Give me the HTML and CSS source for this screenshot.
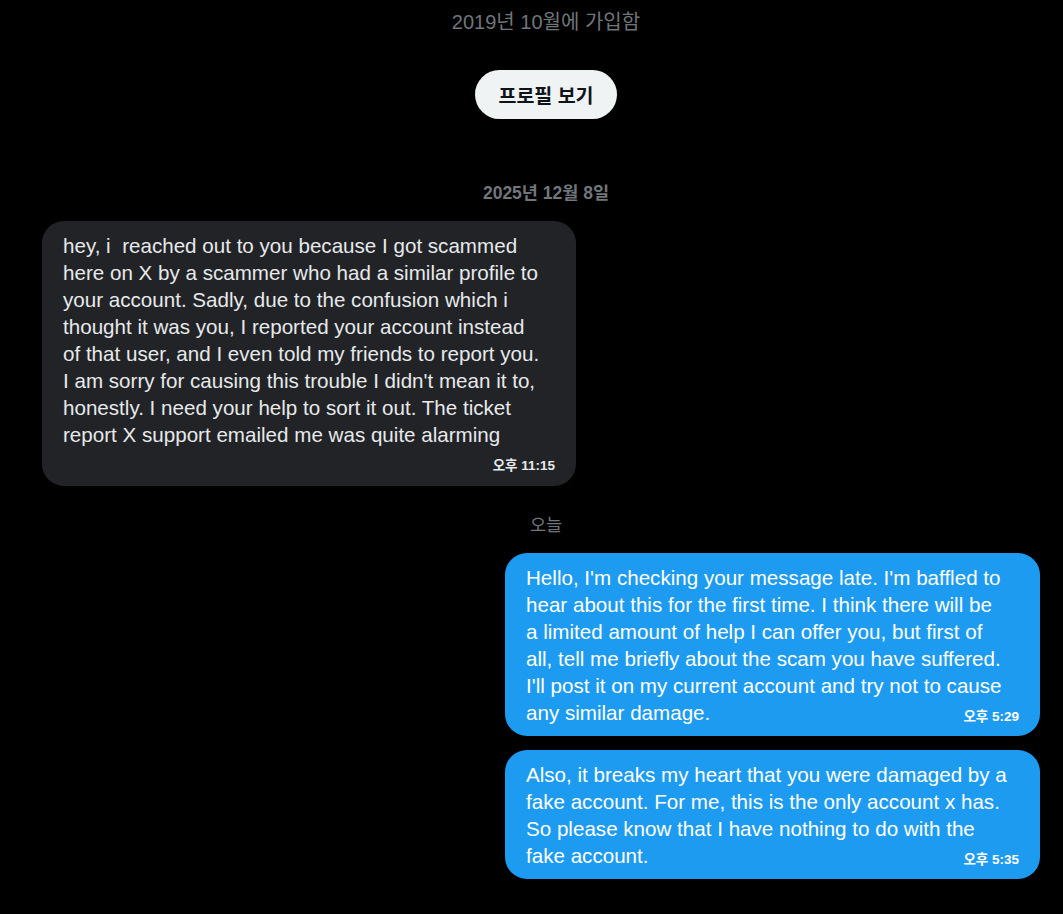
FILE: index.html
```html
<!DOCTYPE html>
<html lang="ko">
<head>
<meta charset="utf-8">
<link rel="stylesheet" href="styles.css">
</head>
<body>
<main class="timeline">
  <div class="joined">2019년 10월에 가입함</div>
  <div class="profile-row"><button class="profile-btn">프로필 보기</button></div>
  <div class="day">2025년 12월 8일</div>
  <div class="row in">
    <div class="bubble recv">hey, i&nbsp; reached out to you because I got scammed<br>here on X by a scammer who had a similar profile to<br>your account. Sadly, due to the confusion which i<br>thought it was you, I reported your account instead<br>of that user, and I even told my friends to report you.<br>I am sorry for causing this trouble I didn't mean it to,<br>honestly. I need your help to sort it out. The ticket<br>report X support emailed me was quite alarming<span class="time">오후 11:15</span></div>
  </div>
  <div class="day today">오늘</div>
  <div class="row out">
    <div class="bubble sent">Hello, I'm checking your message late. I'm baffled to<br>hear about this for the first time. I think there will be<br>a limited amount of help I can offer you, but first of<br>all, tell me briefly about the scam you have suffered.<br>I'll post it on my current account and try not to cause<br>any similar damage.<span class="time">오후 5:29</span></div>
  </div>
  <div class="row out">
    <div class="bubble sent">Also, it breaks my heart that you were damaged by a<br>fake account. For me, this is the only account x has.<br>So please know that I have nothing to do with the<br>fake account.<span class="time">오후 5:35</span></div>
  </div>
</main>
</body>
</html>
```
FILE: styles.css
```css
html, body {
  margin: 0;
  background: #000;
}
body {
  font-family: "Liberation Sans", "Noto Sans CJK KR", sans-serif;
  color: #e7e9ea;
}
.timeline {
  display: flex;
  flex-direction: column;
  padding: 0 13px 0 42px;
  width: 1063px;
  box-sizing: border-box;
}
.joined {
  text-align: center;
  color: #71767b;
  font-size: 20px;
  line-height: 24px;
  padding-top: 10px;
}
.profile-row {
  display: flex;
  justify-content: center;
  padding-top: 36px;
}
.profile-btn {
  font-family: inherit;
  background: #eff3f4;
  color: #0f1419;
  border: none;
  border-radius: 999px;
  height: 49px;
  width: 142px;
  font-size: 19.5px;
  font-weight: 700;
  padding: 0;
}
.day {
  text-align: center;
  color: #71767b;
  font-size: 17.5px;
  font-weight: 700;
  line-height: 20px;
  margin-top: 64px;
}
.day.today {
  margin-top: 29px;
  font-weight: 400;
}
.row {
  display: flex;
}
.row.in {
  justify-content: flex-start;
  margin-top: 18px;
}
.row.out {
  justify-content: flex-end;
  margin-right: 10px;
  margin-top: 14px;
}
.day.today + .row.out { margin-top: 18px; }
.bubble {
  display: flow-root;
  width: 534px;
  box-sizing: border-box;
  padding: 11px 21px 12px 21px;
  border-radius: 22px;
  font-size: 20.6px;
  line-height: 27px;
}
.recv {
  background: #212327;
  color: #e7e9ea;
}
.sent {
  background: #1d9bf0;
  color: #fff;
  width: 535px;
  padding-bottom: 10px;
}
.time {
  float: right;
  margin-top: 10px;
  font-size: 13.5px;
  line-height: 16px;
  font-weight: 700;
}
```
